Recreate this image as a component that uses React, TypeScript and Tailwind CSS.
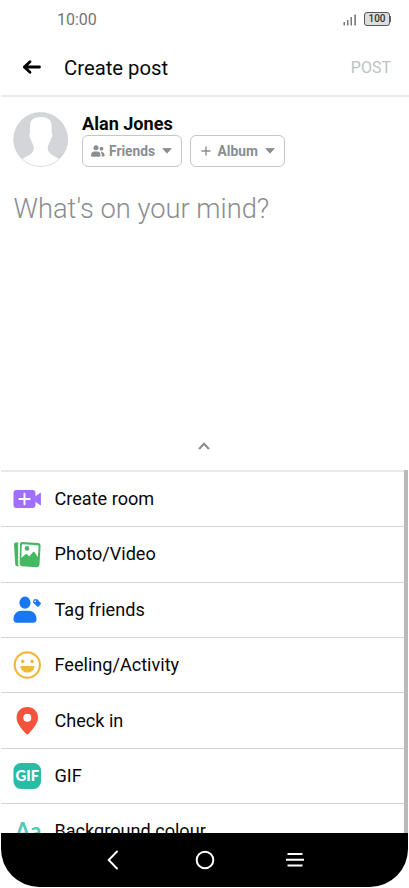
import React from "react";

const CreateRoomIcon = () => (
  <svg width="28" height="28" viewBox="0 0 28 28">
    <rect x="0.500" y="5" width="22" height="18" rx="3" fill="#a06ffb" />
    <path d="M22.500 11.500 27.500 8V20L22.500 16.500Z" fill="#a06ffb" stroke="#a06ffb" strokeWidth="0.800" strokeLinejoin="round" />
    <path d="M11.500 8.800V19.200M6.300 14H16.700" stroke="#fff" strokeWidth="1.900" strokeLinecap="round" />
  </svg>
);

const PhotoIcon = () => (
  <svg width="28" height="28" viewBox="0 0 28 28">
    <path d="M5.200 1.200 2.600 1.500Q.8 1.700 1 3.700L2.200 23Q2.400 25.200 4.200 25.200H6Q5 24.200 5.100 22.500Z" fill="#45b862" />
    <path d="M9.200 1 25.200 2.100Q27.700 2.300 27.600 4.700L26.500 23.800Q26.300 26.300 23.800 26.200L8.900 25.200Q6.500 25 6.600 22.600L7 3.100Q7.100.9 9.200 1Z" fill="#45b862" />
    <path d="M10 3.200 24.600 4.200Q25.700 4.300 25.600 5.400L24.900 15.900 21.500 11.300Q20.600 10.400 19.800 11.300L16.300 15.500 14 13.300Q13.200 12.600 12.500 13.300L8.300 17.100 8.800 4.300Q8.900 3.100 10 3.200Z" fill="#fff" />
    <circle cx="14" cy="7.400" r="2.300" fill="#45b862" />
  </svg>
);

const TagIcon = () => (
  <svg width="28" height="28" viewBox="0 0 28 28" fill="#1877f2">
    <ellipse cx="12" cy="6.700" rx="5.600" ry="6.100" />
    <path d="M.5 23.300C.5 17.800 4 14.800 8.500 14.800H15.500C20 14.800 23.500 17.800 23.500 23.300Q23.500 26.800 20 26.800H4Q.5 26.800 .5 23.300Z" />
    <path d="M20.900 3.300 24.400 3.200 27.700 6.900Q28.300 7.600 27.600 8.300L25.700 10.600Q25 11.200 24.300 10.600L20.400 7.100Q19.900 6.500 20 5.900Z" />
    <circle cx="22.200" cy="5.300" r="0.900" fill="#fff" />
  </svg>
);

const FeelingIcon = () => (
  <svg width="28" height="28" viewBox="0 0 28 28">
    <circle cx="14.300" cy="14" r="12.600" fill="none" stroke="#f0b93a" strokeWidth="2.100" />
    <ellipse cx="9.700" cy="10.300" rx="1.700" ry="1.900" fill="#f0b93a" />
    <ellipse cx="19.100" cy="10.300" rx="1.700" ry="1.900" fill="#f0b93a" />
    <path d="M8.400 15H20.500C21.200 15 21.500 15.300 21.400 16 20.800 19.500 18 21.600 14.400 21.600S8.100 19.500 7.500 16C7.400 15.300 7.700 15 8.400 15Z" fill="#f0b93a" />
  </svg>
);

const PinIcon = () => (
  <svg width="28" height="28" viewBox="0 0 28 28">
    <path d="M14.300 0C8 0 3.600 4.600 3.600 10.500 3.600 16.500 8 21 13 26.800Q14.300 28.200 15.600 26.800C20.600 21 25 16.500 25 10.500 25 4.600 20.600 0 14.300 0Z" fill="#f5533d" />
    <circle cx="14.300" cy="10.800" r="4" fill="#fff" />
  </svg>
);

const GifIcon = () => (
  <svg width="28" height="28" viewBox="0 0 28 28">
    <rect x="0.500" y="1" width="27.500" height="26" rx="7.500" fill="#2abba7" />
    <text x="2.500" y="19.300" textLength="23.500" lengthAdjust="spacingAndGlyphs" fontFamily="Lato, sans-serif" fontWeight="900" fontSize="15.500" fill="#fff">
      GIF
    </text>
  </svg>
);

const BackgroundIcon = () => (
  <svg width="28" height="28" viewBox="0 0 28 28">
    <text x="2" y="22" textLength="26.500" lengthAdjust="spacingAndGlyphs" fontFamily="Lato, sans-serif" fontWeight="700" fontSize="23" fill="#54c7b5">
      Aa
    </text>
  </svg>
);

const options = [
  { label: "Create room", icon: CreateRoomIcon },
  { label: "Photo/Video", icon: PhotoIcon },
  { label: "Tag friends", icon: TagIcon },
  { label: "Feeling/Activity", icon: FeelingIcon },
  { label: "Check in", icon: PinIcon },
  { label: "GIF", icon: GifIcon },
  { label: "Background colour", icon: BackgroundIcon },
];

const Caret = () => (
  <svg width="10" height="6" viewBox="0 0 10 6">
    <path d="M.8.500H9.200L5 5.200Z" fill="#8a8d91" stroke="#8a8d91" strokeWidth="0.800" strokeLinejoin="round" />
  </svg>
);

const StatusBar = () => (
  <div className="h-[38px] flex items-center justify-between pl-[57px] pr-[18px]">
    <span className="pt-[2px] text-[16px] leading-none text-[#757575]">10:00</span>
    <div className="flex items-center gap-[7px]">
      <svg width="14" height="13" viewBox="0 0 14 13" fill="#777">
        <rect x="0.500" y="9" width="1.500" height="3.500" />
        <rect x="4" y="7" width="1.500" height="5.500" />
        <rect x="7.500" y="4" width="1.500" height="8.500" />
        <rect x="11.300" y="1.500" width="1.600" height="11" />
      </svg>
      <div className="flex items-center">
        <div className="w-[26px] h-[14px] rounded-[3px] border border-[#555] bg-[#ddd] flex items-center justify-center text-[10px] leading-none font-medium text-[#333]">
          100
        </div>
        <div className="w-px h-[6px] bg-[#666]" />
      </div>
    </div>
  </div>
);

const Header = () => (
  <div className="h-[59px] ml-px border-b-2 border-[#e9e9e9] flex items-center pt-px pl-[21px] pr-[18px]">
    <svg width="20" height="16" viewBox="0 0 20 16" fill="none" stroke="#000" strokeWidth="2.800" strokeLinecap="round" strokeLinejoin="round">
      <path d="M17.500 8H3M8 2.700 2.300 8 8 13.300" />
    </svg>
    <h1 className="ml-[22px] pt-[2px] text-[20.3px] leading-none text-[#080808]">Create post</h1>
    <span className="ml-auto pt-px text-[16px] leading-none text-[#bec1c5]">POST</span>
  </div>
);

const Author = () => (
  <div className="flex pl-[13px] pt-[15px]">
    <svg width="56" height="56" viewBox="0 0 56 56">
      <defs>
        <clipPath id="avatar">
          <circle cx="27.700" cy="27.500" r="27" />
        </clipPath>
      </defs>
      <g clipPath="url(#avatar)">
        <rect width="56" height="56" fill="#d3d5d9" />
        <path
          d="M27.800 5C35 5 38.700 8 38.700 14V21C39.800 22 39.300 25.500 37.700 27.500 37 30 35.200 32.500 34.700 35.500 34.500 42 41 44 48 48V56H7.500V48C14.500 44 21 42 20.800 35.500 20.300 32.500 18.500 30 17.900 27.500 16.300 25.500 15.900 22 17 21V14C17 8 20.500 5 27.800 5Z"
          fill="#fff"
        />
      </g>
      <circle cx="27.700" cy="27.500" r="27" fill="none" stroke="#c9cbce" strokeWidth="0.600" />
    </svg>
    <div className="ml-[13px]">
      <p className="mt-px h-[21px] text-[18.1px] leading-[21px] font-bold text-[#080808]">Alan Jones</p>
      <div className="mt-px flex gap-2 text-[13.8px] leading-none font-bold text-[#8a8d91]">
        <div className="w-[100px] h-[32px] flex items-center rounded-md border border-[#c5c6c8] pl-2">
          <svg width="14" height="12" viewBox="0 0 14 12" fill="#8a8d91">
            <circle cx="5" cy="2.700" r="2.500" />
            <path d="M0 10.500C0 8 1.500 6.500 3.500 6.500H6.500C8.500 6.500 9.500 8 9.500 10.500Q9.500 11.700 8 11.700H1.500Q0 11.700 0 10.500Z" />
            <circle cx="10.500" cy="3.700" r="1.900" />
            <path d="M9.700 6.700H11Q13.600 7.200 13.700 10.200 13.700 11.500 12.500 11.500H10.700Q11.200 8.500 9.700 6.700Z" />
          </svg>
          <span className="ml-[4px] pt-px">Friends</span>
          <span className="ml-[7px]"><Caret /></span>
        </div>
        <div className="w-[95px] h-[32px] flex items-center rounded-md border border-[#c5c6c8] pl-[10px]">
          <svg width="10" height="10" viewBox="0 0 10 10" stroke="#8a8d91" strokeWidth="1.400">
            <path d="M5 .5V9.500M.5 5H9.500" />
          </svg>
          <span className="ml-[6.5px] pt-px">Album</span>
          <span className="ml-[7px]"><Caret /></span>
        </div>
      </div>
    </div>
  </div>
);

const NavBar = () => (
  <div className="mx-px h-[54px] bg-black rounded-b-[38px] flex items-center pl-[106px] text-white">
    <svg width="12" height="20" viewBox="0 0 12 20" fill="none" stroke="currentColor" strokeWidth="1.900" strokeLinecap="round">
      <path d="M10 1.500 1.700 10 10 18.500" />
    </svg>
    <svg className="ml-[75.500px] mr-[71.500px]" width="20" height="20" viewBox="0 0 20 20" fill="none" stroke="currentColor" strokeWidth="2">
      <circle cx="10" cy="10" r="8.300" />
    </svg>
    <svg width="18" height="16" viewBox="0 0 18 16" stroke="currentColor" strokeWidth="2">
      <path d="M1.500 2H16.500M0 7.700H18M1.500 13.400H16.500" />
    </svg>
  </div>
);

const App = () => {
  return (
    <div className="w-[409px] h-[888px] flex flex-col overflow-hidden bg-white font-[Roboto,sans-serif]">
      <StatusBar />
      <Header />
      <div className="h-[373px] flex flex-col">
        <Author />
        <p className="mt-[24px] ml-[13.5px] text-[27.3px] leading-[34px] font-light text-[#8a8d91]">
          What's on your mind?
        </p>
        <svg className="mt-auto mb-[20px] ml-[198px]" width="12" height="8" viewBox="0 0 12 8" fill="none" stroke="#8a8d91" strokeWidth="2.200">
          <path d="M1 7 6 1.800 11 7" />
        </svg>
      </div>
      <div className="h-[363px] flex overflow-hidden">
        <div className="flex-1 ml-px border-t-2 border-[#e9e9e9]">
          {options.map(({ label, icon: Icon }) => (
            <div key={label} className="h-[55.35px] flex items-center pl-[12px] border-b border-[#d4d4d4]">
              <Icon />
              <span className="ml-[13.5px] text-[18.1px] leading-none whitespace-nowrap text-[#080808]">{label}</span>
            </div>
          ))}
        </div>
        <div className="w-1 mr-px bg-[#b9b9b9]" />
      </div>
      <NavBar />
    </div>
  );
};

export default App;
